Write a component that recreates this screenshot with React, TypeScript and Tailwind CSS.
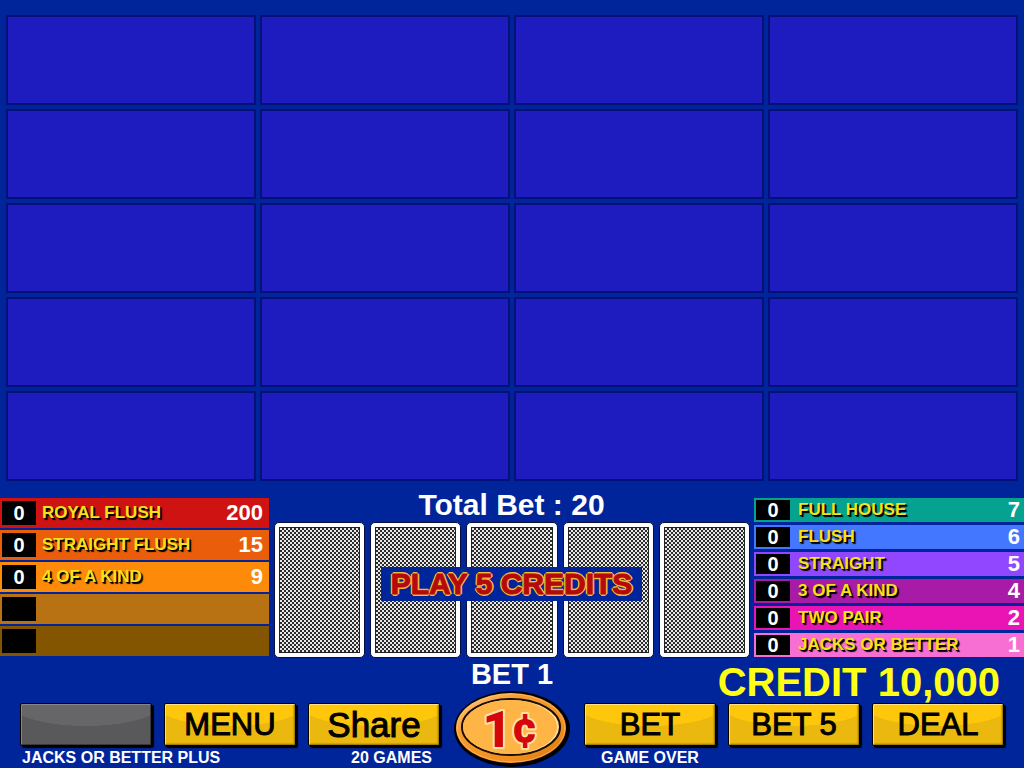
import clsx from "clsx";

interface PayRow {
  name: string;
  pays: string;
  hits: string;
  color: string;
}

const LEFT_PAYS: PayRow[] = [
  { name: "ROYAL FLUSH", pays: "200", hits: "0", color: "bg-[#cf1312]" },
  { name: "STRAIGHT FLUSH", pays: "15", hits: "0", color: "bg-[#ea5d0b]" },
  { name: "4 OF A KIND", pays: "9", hits: "0", color: "bg-[#fd8a08]" },
  { name: "", pays: "", hits: "", color: "bg-[#b87214]" },
  { name: "", pays: "", hits: "", color: "bg-[#835500]" },
];

const RIGHT_PAYS: PayRow[] = [
  { name: "FULL HOUSE", pays: "7", hits: "0", color: "bg-[#06a291]" },
  { name: "FLUSH", pays: "6", hits: "0", color: "bg-[#4477ff]" },
  { name: "STRAIGHT", pays: "5", hits: "0", color: "bg-[#9147ff]" },
  { name: "3 OF A KIND", pays: "4", hits: "0", color: "bg-[#a81ba6]" },
  { name: "TWO PAIR", pays: "2", hits: "0", color: "bg-[#ea14b4]" },
  { name: "JACKS OR BETTER", pays: "1", hits: "0", color: "bg-[#f76fd2]" },
];

// ── Hand grid ─────────────────────────────────────────────────────────────────
function HandGrid() {
  return (
    <div className="grid grid-cols-4 gap-1 px-1.5">
      {Array.from({ length: 20 }, (_, i) => (
        <div key={i} className="h-[90px] border-2 border-[#051078] bg-[#1e1cbe]" />
      ))}
    </div>
  );
}

// ── Pay table ─────────────────────────────────────────────────────────────────
function PayTable({ rows, compact }: { rows: PayRow[]; compact?: boolean }) {
  return (
    <table className="block w-full">
      <tbody className={clsx("flex flex-col", compact ? "gap-[3px]" : "gap-0.5")}>
        {rows.map((row, i) => (
          <tr
            key={i}
            className={clsx(
              "flex items-center pl-0.5",
              compact ? "h-6 pr-1" : "h-[30px] pr-1.5",
              row.color,
            )}
          >
            <td
              className={clsx(
                "flex w-[34px] shrink-0 items-center justify-center bg-black text-xl font-bold text-white",
                compact ? "h-5" : "h-6",
              )}
            >
              {row.hits}
            </td>
            <th
              scope="row"
              className={clsx(
                "flex-1 whitespace-nowrap text-left text-[17px] leading-6 font-bold text-[#f7e11c] [text-shadow:1px_1px_0_#000,2px_2px_1px_#000]",
                compact ? "pl-2" : "pl-1.5",
              )}
            >
              {row.name}
            </th>
            <td className="text-[22px] leading-6 font-bold text-white">{row.pays}</td>
          </tr>
        ))}
      </tbody>
    </table>
  );
}

// ── Cards ─────────────────────────────────────────────────────────────────────
function CardBack() {
  return (
    <div className="h-[136px] rounded-[5px] border border-[#0a0f3c] bg-white p-1">
      <div className="h-full border border-[#222] bg-[conic-gradient(#2c2c2c_25%,#e8e8e8_0_50%,#2c2c2c_0_75%,#e8e8e8_0)] bg-[length:4px_4px]" />
    </div>
  );
}

function Cards() {
  return (
    <div className="relative grid grid-cols-5 gap-[5px] pl-[5px] pr-1">
      {Array.from({ length: 5 }, (_, i) => (
        <CardBack key={i} />
      ))}
      <div className="absolute inset-0 flex items-center justify-center pb-3">
        <p className="bg-[#00259a] px-[10px] text-[30px] leading-[34px] font-bold whitespace-nowrap text-[#b40a0c] [-webkit-text-stroke:1px_#b40a0c] [text-shadow:1px_1px_0_#f5b63c,-1px_-1px_0_#f5b63c,1px_-1px_0_#f5b63c,-1px_1px_0_#f5b63c,2px_0_0_#f5b63c,-2px_0_0_#f5b63c,0_2px_0_#f5b63c,0_-2px_0_#f5b63c]">
          PLAY 5 CREDITS
        </p>
      </div>
    </div>
  );
}

// ── Buttons ───────────────────────────────────────────────────────────────────
function GameButton({
  label,
  disabled,
  large,
}: {
  label: string;
  disabled?: boolean;
  large?: boolean;
}) {
  return (
    <button
      type="button"
      disabled={disabled}
      aria-label={label || "Unused"}
      className={clsx(
        "h-[43px] rounded-[2px] border border-black leading-9 text-black [-webkit-text-stroke:1px_#000]",
        large ? "text-[35px]" : "text-[31px]",
        disabled
          ? "bg-[#59595b] bg-[radial-gradient(ellipse_58%_54%_at_50%_0%,#666669_98%,transparent_100%)] shadow-[inset_1px_1px_0_#858587,inset_-1px_-1px_0_#39393b,2px_2px_1px_#000]"
          : "bg-[#eab80e] bg-[radial-gradient(ellipse_58%_54%_at_50%_0%,#fec70b_98%,transparent_100%)] shadow-[inset_1px_1px_0_#ffe27a,inset_-1px_-1px_0_#a37e05,inset_-2px_-2px_1px_#d0a20c,2px_2px_1px_#000]",
      )}
    >
      {label}
    </button>
  );
}

function CoinButton() {
  return (
    <button type="button" aria-label="Coin value 1 cent" className="row-span-2 -mt-3 flex justify-center">
      <svg viewBox="0 0 120 77" className="h-[77px] w-[120px]">
        <defs>
          <linearGradient id="rim" x1="0" y1="0" x2="1" y2="1">
            <stop offset="0" stopColor="#ffd49a" />
            <stop offset="0.3" stopColor="#f79c2e" />
            <stop offset="0.75" stopColor="#f08d1e" />
            <stop offset="1" stopColor="#c86c0c" />
          </linearGradient>
        </defs>
        <ellipse cx="60" cy="38" rx="58" ry="38" fill="#000" />
        <ellipse cx="59" cy="37" rx="55" ry="35" fill="url(#rim)" />
        <ellipse cx="59" cy="37" rx="54" ry="34" fill="none" stroke="#ffc988" strokeOpacity="0.5" />
        <ellipse cx="59" cy="36" rx="49" ry="28" fill="#ffe0a0" stroke="#1a0c00" strokeWidth="2" />
        <ellipse cx="58" cy="36" rx="47" ry="27" fill="#ffb545" />
        <g
          fill="#d4070b"
          stroke="#ffe2a4"
          strokeWidth="4"
          strokeLinejoin="round"
          paintOrder="stroke"
          fontFamily="Roboto, 'Liberation Sans', sans-serif"
          fontWeight="900"
          textAnchor="middle"
        >
          <text x="45" y="56" fontSize="50">
            1
          </text>
          <text x="73" y="52" fontSize="44">
            ¢
          </text>
        </g>
      </svg>
    </button>
  );
}

// ── Game ──────────────────────────────────────────────────────────────────────
export default function App() {
  return (
    <main className="min-h-screen bg-[#00259a] pt-[15px] font-['Liberation_Sans',Arial,sans-serif]">
      <HandGrid />

      <div className="mt-[7px] grid grid-cols-[269fr_485fr_270fr]">
        <div className="pt-[10px]">
          <PayTable rows={LEFT_PAYS} />
        </div>
        <div>
          <p className="text-center text-[30px] leading-[34px] font-bold text-white">
            Total Bet : 20
          </p>
          <Cards />
        </div>
        <div className="pt-[10px]">
          <PayTable rows={RIGHT_PAYS} compact />
        </div>
      </div>

      <div className="grid h-[45px] grid-cols-[1fr_auto_1fr]">
        <span />
        <p className="text-[29px] leading-8 font-bold text-white">BET 1</p>
        <p className="self-end pr-6 text-right text-[40px] leading-[42px] font-bold text-[#ffff14]">
          CREDIT 10,000
        </p>
      </div>

      <div className="grid grid-cols-[1fr_1fr_1fr_120px_1fr_1fr_1fr] gap-x-3 px-5">
        <GameButton label="" disabled />
        <GameButton label="MENU" />
        <GameButton label="Share" large />
        <CoinButton />
        <GameButton label="BET" />
        <GameButton label="BET 5" />
        <GameButton label="DEAL" />

        <p className="col-span-2 pt-px pl-0.5 leading-5 font-bold text-white">JACKS OR BETTER PLUS</p>
        <p className="pt-px pr-2 text-right leading-5 font-bold text-white">20 GAMES</p>
        <p className="pt-px text-center leading-5 font-bold text-white">GAME OVER</p>
      </div>
    </main>
  );
}
